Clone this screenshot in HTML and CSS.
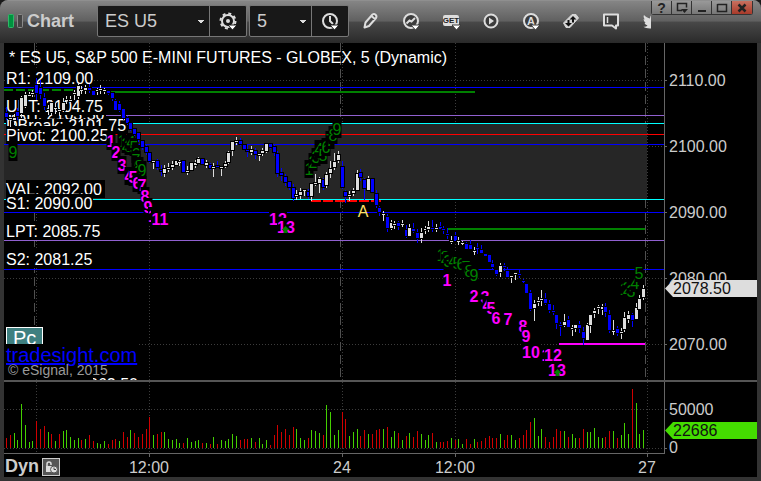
FILE: index.html
```html
<!DOCTYPE html>
<html lang="en">
<head>
    <meta charset="UTF-8">
    <meta name="viewport" content="width=device-width, initial-scale=1.0">
    <title>Chart - ES U5</title>
    <link rel="stylesheet" href="styles.css">
</head>
<body>
<div class="window">
    <header class="titlebar">
        <div class="toolbar">
            <svg class="link-bars" width="16" height="14" viewBox="0 0 16 14" aria-hidden="true">
                <rect x="0.5" y="0.5" width="5" height="13" rx="1" fill="#00923f" stroke="#2fb868"/>
                <rect x="9.5" y="0.5" width="5" height="13" rx="1" fill="#444" stroke="#8a8a8a"/>
            </svg>
            <h1 class="title">Chart</h1>

            <div class="field field-symbol">
                <select class="field-select" aria-label="Symbol"><option>ES U5</option></select>
                <button class="field-btn" aria-label="Symbol settings">
                    <svg width="20" height="20" viewBox="0 0 20 20">
                        <circle cx="10" cy="10" r="6" fill="none" stroke="#ddd" stroke-width="2"/>
                        <circle cx="10" cy="10" r="7.5" fill="none" stroke="#ddd" stroke-width="2" stroke-dasharray="3 2.9"/>
                        <circle cx="10" cy="10" r="2" fill="#ddd"/>
                        <path d="M10 14h9l-4.500 5z" fill="#fff" stroke="#181818"/>
                    </svg>
                </button>
            </div>
            <div class="field field-interval">
                <select class="field-select" aria-label="Interval"><option>5</option></select>
                <button class="field-btn" aria-label="Time template">
                    <svg width="20" height="20" viewBox="0 0 20 20">
                        <circle cx="10" cy="10" r="7" fill="none" stroke="#ddd" stroke-width="2"/>
                        <path d="M10 5v5l3 3" fill="none" stroke="#ddd" stroke-width="2"/>
                        <path d="M10 14h9l-4.500 5z" fill="#fff" stroke="#181818"/>
                    </svg>
                </button>
            </div>

            <nav class="tools">
                <button class="tool" aria-label="Draw">
                    <svg width="20" height="20" viewBox="0 0 20 20"><path d="M3.500 16.500l1-5 7-8c2-1.500 5 .8 3.500 3.500l-7 8zM10.500 5l4 3.500" fill="#4a4a4a" stroke="#ddd" stroke-width="2" stroke-linejoin="round"/></svg>
                </button>
                <button class="tool" aria-label="Studies">
                    <svg width="20" height="20" viewBox="0 0 20 20"><circle cx="10" cy="10" r="7" fill="#3c3c3c" stroke="#ddd" stroke-width="2"/><path d="M5.500 12.500l3-3 2 1 3.500-3.500" fill="none" stroke="#ddd" stroke-width="2"/><path d="M10 14h9l-4.500 5z" fill="#fff" stroke="#3a3a3a"/></svg>
                </button>
                <button class="tool" aria-label="Advanced GET">
                    <svg width="20" height="20" viewBox="0 0 20 20"><rect x="2" y="4" width="16" height="11" rx="2" fill="#ddd"/><text x="10" y="12" class="get-text">GET</text><path d="M11 14h9l-4.500 5z" fill="#fff" stroke="#3a3a3a"/></svg>
                </button>
                <button class="tool" aria-label="Playback">
                    <svg width="20" height="20" viewBox="0 0 20 20"><circle cx="10" cy="10" r="6.500" fill="#3c3c3c" stroke="#ddd" stroke-width="2"/><path d="M8 6.500v7l5-3.500z" fill="#ddd"/></svg>
                </button>
                <button class="tool" aria-label="Alerts">
                    <svg width="20" height="20" viewBox="0 0 20 20"><circle cx="10" cy="10" r="7" fill="#3c3c3c" stroke="#ddd" stroke-width="2"/><text x="10" y="14" class="alert-text">A</text><path d="M10 14h9l-4.500 5z" fill="#fff" stroke="#3a3a3a"/></svg>
                </button>
                <button class="tool" aria-label="Trade">
                    <svg width="20" height="20" viewBox="0 0 20 20"><path d="M2.500 12L11 3.500h4l2.500 3.500L9 16.500H5z" fill="#d5d5d5" stroke="#d5d5d5" stroke-linejoin="round"/><path d="M12 5l3.500 3.500H13v3h-2v-3H8.500zM7.500 15.500L4 12h2.500V9h2v3H11z" fill="#111"/></svg>
                </button>
                <button class="tool" aria-label="Notes">
                    <svg width="20" height="20" viewBox="0 0 20 20"><path d="M3 3.500h14v11h-2v3l-4-3H3z" fill="#3c3c3c" stroke="#ddd" stroke-width="2" stroke-linejoin="round"/><path d="M6.500 6v6" stroke="#ddd" stroke-width="1.500"/></svg>
                </button>
                <button class="tool" aria-label="Twitter">
                    <svg width="20" height="20" viewBox="0 0 20 20"><path d="M3 4c1.500 2 4 3 6 3.500 0-3 2-4.500 4-4.500s3 1 3.500 1.500L20 4l-1.500 3C18 13 14.500 17.500 9 17.500c-3 0-5-.6-6.500-1.700 2 0 3.500-.5 4-1.300-1.500-.3-2.500-1.300-3-2.700h1.200C3.500 11 2.600 9.500 2.600 8l1.200.4C2.600 7 2.300 5.500 3 4z" fill="#ddd"/></svg>
                </button>
            </nav>
        </div>
        <div class="window-buttons">
            <button aria-label="Help">?</button>
            <button aria-label="Window menu"><svg width="12" height="12" viewBox="0 0 12 12"><path d="M6 8.500H1.500v-7h9v4" fill="none" stroke="#222" stroke-width="1.500"/><path d="M5 7h7l-3.500 4z" fill="#222"/></svg></button>
            <button aria-label="Minimize"><svg width="12" height="12" viewBox="0 0 12 12"><path d="M2 9h8" stroke="#222" stroke-width="2"/></svg></button>
            <button aria-label="Maximize"><svg width="12" height="12" viewBox="0 0 12 12"><path d="M1.500 2v7.500h9v-7h-9" fill="none" stroke="#222" stroke-width="1.500"/></svg></button>
            <button class="close" aria-label="Close"><svg width="12" height="12" viewBox="0 0 12 12"><path d="M2.500 2.500l7 7m0-7l-7 7" stroke="#222" stroke-width="2.500"/></svg></button>
        </div>
    </header>

    <main class="chart">
        <svg class="pane" id="price" viewBox="4 43 660 337">
            <g class="grid">
                <path d="M4 80.500H664M4 146.500H664M4 212.500H664M4 278.500H664M4 344.500H664"/>
                <path d="M36.500 43V380M149.500 43V380M342.500 43V380M455.500 43V380M647.500 43V380"/>
            </g>
            <path class="session" d="M34.500 43V380M340.500 43V380M645.500 43V380"/>
            <rect x="4" y="123" width="643" height="76" fill="#262626"/>
            <g id="levels"></g>
            <g id="labels"></g>
            <text class="label" x="9" y="63">* ES U5, S&amp;P 500 E-MINI FUTURES - GLOBEX, 5 (Dynamic)</text>
            <g id="counts"></g>
            <g id="candles"></g>
            <text class="wave" x="363" y="217">A</text>
            <path class="arrow" d="M285.500 226l4 4h-2v3h-4v-3h-2zM557.500 369l4 4h-2v3h-4v-3h-2z"/>
            <rect x="6.500" y="327.500" width="36" height="17" fill="#3f8080" stroke="#fff"/>
            <text class="pc" x="13" y="345">Pc</text>
            <rect x="4" y="344" width="133" height="33"/>
            <text class="label" x="89" y="390">062.50</text>
            <rect x="80" y="377" width="13" height="3"/>
            <a href="#tradesight"><text class="site" x="6" y="362">tradesight.com</text></a>
            <text class="copyright" x="8" y="375">© eSignal, 2015</text>
        </svg>
        <svg class="pane" viewBox="664 43 93 337">
            <path class="axis" d="M664.500 43V380M664 80.500h3M664 146.500h3M664 212.500h3M664 278.500h3M664 344.500h3"/>
            <g class="scale">
                <text x="669" y="86">2110.00</text>
                <text x="669" y="152">2100.00</text>
                <text x="669" y="218">2090.00</text>
                <text x="669" y="284">2080.00</text>
                <text x="669" y="350">2070.00</text>
            </g>
            <path d="M665 288.500l8-8.500h84v17h-84z" fill="#ddd"/>
            <text class="tag" x="673" y="294">2078.50</text>
        </svg>

        <div class="divider"></div>

        <svg class="pane" id="volume" viewBox="4 382 660 71">
            <g class="grid">
                <path d="M4 409.500H664M4 448.500H664"/>
                <path d="M36.500 382V453M149.500 382V453M342.500 382V453M455.500 382V453M647.500 382V453"/>
            </g>
            <g id="bars"></g>
        </svg>
        <svg class="pane" viewBox="664 382 93 71">
            <path class="axis" d="M664.500 382V453M664 409.500h3M664 448.500h3"/>
            <g class="scale">
                <text x="669" y="415">50000</text>
                <text x="669" y="453">0</text>
            </g>
            <path d="M665 430.500l8-8.500h84v17h-84z" fill="#4d0"/>
            <text class="tag" x="673" y="436">22686</text>
        </svg>

        <div class="time-row">
            <svg class="pane" viewBox="4 453 753 24">
                <path class="axis" d="M4 453.500H665M149.500 453v4M342.500 453v4M455.500 453v4M647.500 453v4"/>
                <g class="scale times">
                    <text x="149" y="473">12:00</text>
                    <text x="342" y="473">24</text>
                    <text x="455" y="473">12:00</text>
                    <text x="647" y="473">27</text>
                </g>
            </svg>
            <div class="dyn">
                <span>Dyn</span>
                <button class="lock" aria-label="Lock time template">
                    <svg width="14" height="14" viewBox="0 0 14 14"><path d="M3 7V4a2 2 0 0 1 4 0v1" fill="none" stroke="#ddd" stroke-width="1.500"/><rect x="2" y="6" width="6" height="6" fill="#ddd"/><circle cx="10" cy="9.500" r="3.500" fill="#ddd" stroke="#555"/><path d="M10 7.500v2h2" fill="none" stroke="#444"/></svg>
                </button>
            </div>
        </div>
    </main>
</div>
<script src="chart.js"></script>
</body>
</html>
```

FILE: styles.css
```css
body {
    margin: 0;
    background: #1a1a1a;
    font-family: "Liberation Sans", Arial, sans-serif;
    color: #ccc;
}

button,
select {
    font-family: inherit;
    margin: 0;
    padding: 0;
    border: none;
    background: none;
}

.window {
    background: #333;
    border-radius: 8px 8px 0 0;
    overflow: hidden;
}

/* title bar */
.titlebar {
    display: flex;
    height: 43px;
    border-top: 1px solid #8f8f8f;
    box-sizing: border-box;
    background: linear-gradient(#858585, #606060 48%, #484848 50%, #2a2a2a);
}

.toolbar {
    display: flex;
    align-items: center;
    flex: 1;
    min-width: 0;
    overflow: hidden;
    padding-left: 8px;
    padding-bottom: 2px;
}

.link-bars {
    flex: none;
    margin-right: 3px;
}

.title {
    flex: none;
    width: 70px;
    margin: 0;
    font-size: 18px;
    font-weight: bold;
    color: #ccc;
}

.field {
    display: flex;
    flex: none;
    height: 32px;
    margin-right: 2px;
    box-sizing: border-box;
    border: 1px solid #777;
    border-radius: 2px;
    background: #181818;
}

.field-symbol {
    width: 150px;
}

.field-interval {
    width: 100px;
}

/* the arrow is three stacked lines */
.field-select {
    flex: 1;
    min-width: 0;
    padding-left: 7px;
    appearance: none;
    font-size: 18px;
    color: #ccc;
    background: linear-gradient(#ddd, #ddd) no-repeat right 5px top 14px / 6px 1px,
                linear-gradient(#ddd, #ddd) no-repeat right 6px top 15px / 4px 1px,
                linear-gradient(#ddd, #ddd) no-repeat right 7px top 16px / 2px 1px;
}

.field-btn {
    width: 37px;
    border-left: 1px solid #777;
}

.field-btn svg,
.tool svg,
.lock svg {
    display: block;
    margin: 0 auto;
}

.tools {
    display: flex;
    flex: none;
}

.tool {
    width: 40px;
    height: 32px;
}

.get-text {
    font-size: 8px;
    font-weight: bold;
    text-anchor: middle;
    fill: #222;
}

.alert-text {
    font-size: 11px;
    font-weight: bold;
    text-anchor: middle;
    fill: #ddd;
}

.window-buttons {
    display: flex;
    flex: none;
    align-self: flex-start;
    margin-right: 8px;
    border: 1px solid #333;
    border-top: none;
    border-radius: 0 0 3px 3px;
}

.window-buttons button {
    display: flex;
    align-items: center;
    justify-content: center;
    width: 20px;
    height: 13px;
    box-sizing: border-box;
    border-right: 1px solid #333;
    background: linear-gradient(#999, #777);
    font-size: 14px;
    font-weight: bold;
    color: #222;
}

.window-buttons .close {
    border-right: none;
    background: linear-gradient(#c8705f, #a83a2a);
}

/* chart panes */
.chart {
    display: grid;
    grid-template-columns: 660fr 93fr;
    border: 4px solid #333;
    border-top: none;
    background: #000;
}

.pane {
    display: block;
    width: 100%;
    overflow: hidden;
    font-size: 16px;
}

.divider {
    grid-column: 1 / -1;
    height: 2px;
    background: #555;
}

.time-row {
    grid-column: 1 / -1;
    position: relative;
}

.dyn {
    position: absolute;
    top: 3px;
    left: 1px;
    display: flex;
    align-items: center;
    gap: 3px;
    font-size: 18px;
    font-weight: bold;
}

.lock {
    width: 18px;
    height: 18px;
    border: 1px solid #ccc;
    background: #555;
}

.grid path {
    fill: none;
    stroke: #3c3c3c;
    stroke-dasharray: 1 2;
    shape-rendering: crispEdges;
}

.session {
    fill: none;
    stroke: #505050;
    stroke-dasharray: 9 4;
    shape-rendering: crispEdges;
}

.axis {
    fill: none;
    stroke: #666;
    shape-rendering: crispEdges;
}

#levels,
#candles,
#bars {
    shape-rendering: crispEdges;
}

.scale text {
    fill: #ccc;
}

.times text {
    text-anchor: middle;
}

.tag {
    fill: #111;
}

.label {
    fill: #fff;
}

.count {
    text-anchor: middle;
    fill: #008000;
}

.count-bold {
    fill: #f0f;
    font-weight: bold;
}

.wave {
    text-anchor: middle;
    fill: #ffe066;
}

.arrow {
    fill: #008000;
}

.pc {
    font-size: 20px;
    fill: #fff;
}

.site {
    font-size: 20px;
    fill: #00f;
    text-decoration: underline;
}

.copyright {
    font-size: 14px;
    fill: #999;
}
```

FILE: chart.js
```javascript
const NS = 'http://www.w3.org/2000/svg';

function add(parentId, tag, attrs, text) {
    const el = document.createElementNS(NS, tag);
    for (const key in attrs) el.setAttribute(key, attrs[key]);
    if (text) el.textContent = text;
    document.getElementById(parentId).appendChild(el);
}

function barX(i) {
    return Math.floor(36.7 + (i - 8) * 3.77);
}

// x1, x2, y, thickness, color, dash
const levels = [
    [4, 664, 87, 1, '#00f'],
    [4, 80, 89, 2, '#008000', '9 3'],
    [111, 475, 91, 2, '#008000'],
    [4, 664, 115, 1, '#9060d0'],
    [4, 664, 123, 1, '#0ff'],
    [4, 664, 134, 1, '#f00'],
    [4, 664, 144, 1, '#00f'],
    [4, 664, 199, 1, '#0ff'],
    [311, 381, 200, 2, '#f00', '10 2'],
    [4, 664, 212, 1, '#00f'],
    [447, 645, 228, 2, '#008000'],
    [4, 664, 240, 1, '#9060d0'],
    [4, 664, 269, 1, '#00f'],
    [559, 645, 343, 2, '#f0f']
];
levels.forEach(([x1, x2, y, h, color, dash]) => {
    add('levels', 'line', {
        x1, x2, y1: y + h / 2, y2: y + h / 2,
        stroke: color, 'stroke-width': h, 'stroke-dasharray': dash || 'none'
    });
});

// text, baseline, width of the black plate, plate height above the baseline
const labels = [
    ['R1: 2109.00', 84, 87, 15],
    ['VAH: 2103.50', 120, 100, 15],
    ['UPT: 2104.75', 112, 99, 15],
    ['DBreak: 2101.75', 131, 122, 12],
    ['Pivot: 2100.25', 141, 103, 15],
    ['VAL: 2092.00', 195, 99, 15],
    ['S1: 2090.00', 209, 87, 15],
    ['LPT: 2085.75', 237, 97, 15],
    ['S2: 2081.25', 265, 87, 15]
];
labels.forEach(([text, y, w, up]) => {
    add('labels', 'rect', { x: 6, y: y - up, width: w, height: up + 3 });
    add('labels', 'text', { x: 6, y, class: 'label' }, text);
});

// text, center x, baseline
const setups = [
    ['9', 13, 158],
    ['1', 122, 147], ['2', 126, 150], ['3', 129, 152], ['4', 131, 148], ['5', 134, 153],
    ['6', 136, 160], ['7', 136, 166], ['8', 139, 172], ['9', 142, 176],
    ['1', 309, 175], ['2', 313, 168], ['3', 316, 163], ['4', 319, 155], ['5', 323, 161],
    ['6', 326, 153], ['7', 330, 146], ['8', 333, 141], ['9', 337, 135],
    ['1', 441, 261], ['2', 445, 263], ['3', 448, 267], ['4', 453, 267], ['5', 457, 269],
    ['6', 461, 270], ['7', 466, 273], ['8', 469, 277], ['9', 474, 281],
    ['1', 624, 295], ['2', 627, 294], ['3', 631, 297], ['4', 635, 289], ['5', 639, 279]
];
const countdowns = [
    ['1', 111, 147], ['2', 116, 158], ['3', 122, 171], ['4', 129, 182], ['5', 133, 183],
    ['6', 137, 189], ['7', 142, 191], ['8', 145, 202], ['9', 148, 213], ['10', 157, 222], ['11', 160, 225],
    ['12', 278, 225], ['13', 286, 233],
    ['1', 447, 286], ['2', 474, 302], ['3', 485, 303], ['4', 487, 311], ['5', 491, 314],
    ['6', 496, 324], ['7', 508, 325], ['8', 523, 332], ['9', 526, 342], ['10', 531, 358],
    ['11', 550, 361], ['12', 553, 361], ['13', 557, 376]
];
function drawCount([text, x, y], cls) {
    const w = text.length * 9;
    add('counts', 'rect', { x: x - w / 2, y: y - 15, width: w, height: 18 });
    add('counts', 'text', { x, y, class: cls }, text);
}
setups.forEach(c => drawCount(c, 'count'));
countdowns.forEach(c => drawCount(c, 'count count-bold'));

// direction, wick top, body top, body bottom, wick bottom
const candles = `
b107,113,117,120 w115,118,119,127 w114,118,120,125 b108,112,116,120 w96,98,113,118 w92,95,106,108 w92,95,96,97 w90,93,94,97 b78,85,93,100 b80,88,94,99
b93,98,106,110 w105,110,110,115 w100,103,112,116 w103,108,108,114 w108,110,111,116 w98,103,110,112 w96,100,100,104 w96,100,101,104 w90,93,94,100 w83,86,96,99
w86,90,90,94 w85,88,90,94 b84,88,90,93 b90,91,95,96 w88,90,91,95 w85,89,90,94 w88,90,91,94 b90,91,93,95 b92,93,98,101 b99,101,110,111
b101,104,110,112 b108,109,118,120 b116,118,123,125 b123,123,129,131 b128,129,134,136 b132,133,139,142 b140,141,147,150 b145,147,152,155 b152,153,161,163 w161,161,162,169
b159,161,167,170 b165,170,171,176 w165,169,173,177 w163,168,169,172 w161,165,167,170 w160,161,165,166 w160,162,162,166 b160,161,172,173 w166,171,172,175 w162,163,170,171
w160,163,165,168 w157,159,163,164 b158,159,164,165 w160,163,165,168 b163,165,168,170 w163,167,168,177 b161,166,167,168 w166,167,168,176 w161,164,166,168 w151,153,162,164
w141,142,150,156 w137,141,142,145 b138,141,144,146 b144,145,149,150 b145,150,151,157 w146,150,152,155 b148,151,154,159 w153,154,155,161 w148,151,153,156 w143,144,151,153
b143,144,147,149 b145,147,152,156 b151,154,173,177 b168,173,175,181 b174,177,182,186 b181,182,187,190 b184,188,198,201 w190,195,196,200 w188,192,195,199 w189,190,190,196
b189,192,196,199 w183,184,196,201 w174,183,184,186 w177,179,183,193 b178,180,187,190 w172,175,185,188 w161,169,173,178 w153,162,167,170 w151,155,160,163 b161,167,187,189
b190,192,196,203 w191,195,196,201 w188,191,193,196 w170,174,190,191 b169,173,177,181 b178,180,188,200 w176,179,190,191 b178,179,192,193 b190,194,205,208 b206,208,212,216
w211,214,214,221 b214,217,228,232 w220,223,228,230 w221,224,225,229 b221,223,226,230 w220,224,224,227 b225,230,236,238 w224,228,236,237 b223,229,231,233 b229,233,238,243
w228,233,238,243 w226,229,230,234 w221,227,229,232 b220,228,229,232 w224,228,229,232 b222,227,229,230 b226,229,230,234 b228,234,235,239 w236,241,242,244 b232,236,241,241
w237,241,241,245 w241,243,243,245 b242,244,249,250 b240,245,249,250 w247,251,251,255 b243,248,248,254 b245,250,253,253 b253,254,256,257 b254,255,262,263 b260,264,267,269
b269,270,274,276 w263,266,272,277 b263,266,267,271 b267,271,277,278 w275,276,277,283 w272,273,274,280 b270,274,275,278 b279,281,281,283 b283,284,293,294 b290,293,309,311
w300,304,308,321 w297,301,302,306 w290,299,300,306 b293,299,303,305 b300,304,310,313 b305,311,312,315 b314,315,323,329 b322,325,326,336 w314,322,325,327 b316,320,327,328
w325,328,329,336 w324,325,328,332 b321,325,328,333 b327,332,338,345 w323,325,340,340 w314,315,325,333 w308,311,313,318 w305,307,308,314 w304,307,309,315 b303,307,312,317
b310,315,330,333 w320,331,331,335 b326,329,333,336 w328,332,333,339 w312,318,329,332 w311,315,319,323 b313,315,320,327 w303,308,319,320 w295,299,309,310 w285,289,297,300`;

candles.trim().split(/\s+/).forEach((c, i) => {
    const fill = c[0] === 'b' ? '#00f' : '#ddd';
    const [high, top, bottom, low] = c.slice(1).split(',').map(Number);
    const x = barX(i);
    add('candles', 'rect', { x, y: high, width: 1, height: low - high, fill });
    add('candles', 'rect', { x: x - 2, y: top - 1, width: 5, height: bottom - top + 2 });
    add('candles', 'rect', { x: x - 1, y: top, width: 3, height: Math.max(1, bottom - top), fill });
});

// volume: r = down bar, g = up bar
const volume = `
r10 r13 g15 g8 g44 g23 g6 g7 r27 r19 r22 g16 r14 g7 r14 g17 g18 g11 g8 g10
r8 g9 r13 r7 g5 g4 g7 r4 r8 r9 g7 r16 r11 g18 r15 r11 r14 r19 r31 g13
r14 r16 g16 g9 g8 g9 g5 r5 g10 g6 g7 g8 r5 g5 r4 g11 r4 g8 g7 g9
g14 g12 r8 r9 r9 g10 r6 g10 g4 g8 r3 r13 r23 r16 r19 r13 r21 g19 g10 g8
r10 g18 g17 g15 r13 g43 g36 g13 g18 r36 r29 g12 g16 g19 r12 r18 g14 r14 r18 r19
g19 r21 g11 g17 r15 g8 r12 g15 r11 r17 g14 g8 g13 r15 g6 r6 r6 r7 g10 r8
g9 g4 r9 r4 g9 r6 r7 r10 r12 r10 r10 g14 r8 r13 g13 g8 r10 r13 r18 r26
g30 g12 g19 r11 r6 r11 r19 r17 g17 r11 g14 g10 r10 r19 g16 g16 g20 g11 g10 r11
r17 g17 r10 g13 g25 g14 r59 g45 g14 g18`;

volume.trim().split(/\s+/).forEach((v, i) => {
    const h = Number(v.slice(1));
    add('bars', 'rect', {
        x: barX(i), y: 448 - h, width: 1, height: h,
        fill: v[0] === 'r' ? '#d00000' : '#44d000'
    });
});
```
